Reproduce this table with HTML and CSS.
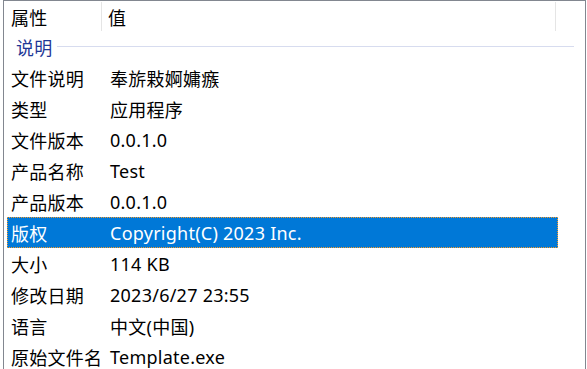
FILE: index.html
```html
<!DOCTYPE html>
<html lang="zh-CN">
<head>
<meta charset="utf-8">
<link rel="stylesheet" href="styles.css">
</head>
<body>
<div class="list">
  <div class="header">
    <div class="hcell hname">属性</div>
    <div class="hcell hvalue">值</div>
    <div class="hcell hrest"></div>
  </div>
  <div class="group">
    <span class="gtitle">说明</span>
    <span class="gline"></span>
  </div>
  <div class="row"><span class="name">文件说明</span><span class="value">奉旂敤婀嫞瘯</span></div>
  <div class="row"><span class="name">类型</span><span class="value">应用程序</span></div>
  <div class="row"><span class="name">文件版本</span><span class="value">0.0.1.0</span></div>
  <div class="row"><span class="name">产品名称</span><span class="value">Test</span></div>
  <div class="row"><span class="name">产品版本</span><span class="value">0.0.1.0</span></div>
  <div class="row selected"><span class="name">版权</span><span class="value">Copyright(C) 2023 Inc.</span></div>
  <div class="row"><span class="name">大小</span><span class="value">114 KB</span></div>
  <div class="row"><span class="name">修改日期</span><span class="value">2023/6/27 23:55</span></div>
  <div class="row"><span class="name">语言</span><span class="value">中文(中国)</span></div>
  <div class="row"><span class="name">原始文件名</span><span class="value">Template.exe</span></div>
</div>
</body>
</html>
```
FILE: styles.css
```css
html, body {
  margin: 0;
  padding: 0;
  background: #ffffff;
  overflow: hidden;
}
body {
  width: 587px;
  height: 369px;
  font-family: "Noto Sans", "Noto Sans CJK SC", sans-serif;
  font-size: 18px;
  letter-spacing: 0.25px;
  color: #000000;
}
.list {
  margin-left: 3px;
  width: 581px;
  height: 380px;
  border: 1px solid #828790;
  border-bottom: none;
  box-sizing: content-box;
}
.header {
  display: flex;
  height: 30px;
  align-items: stretch;
}
.hcell {
  display: flex;
  align-items: center;
  margin-top: 1px;
}
.hname {
  width: 98px;
  padding-left: 7px;
  box-sizing: border-box;
  border-right: 1px solid #e5e5e5;
}
.hvalue {
  width: 454px;
  padding-left: 6px;
  box-sizing: border-box;
  border-right: 1px solid #e5e5e5;
}
.hrest {
  flex: 1;
}
.group {
  display: flex;
  align-items: center;
  height: 31px;
  padding-left: 12px;
  padding-right: 11px;
  gap: 4px;
}
.gtitle {
  color: #1e3796;
}
.gline {
  flex: 1;
  height: 1px;
  background: #d7dcef;
}
.row {
  display: grid;
  grid-template-columns: 99px 1fr;
  width: 551px;
  height: 31px;
  margin-left: 3px;
  padding-left: 4px;
  box-sizing: border-box;
  align-items: center;
  white-space: nowrap;
}
.row.selected {
  background: #0078d7;
  color: #ffffff;
  outline: 1px dotted #f39a2b;
  outline-offset: -1px;
}
```
